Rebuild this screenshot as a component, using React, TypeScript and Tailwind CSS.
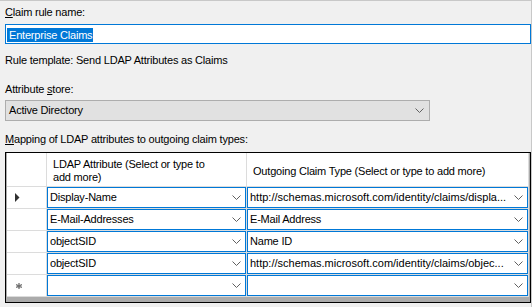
import React from "react";

const rows = [
  { attr: "Display-Name", claim: "http://schemas.microsoft.com/identity/claims/displa...", current: true },
  { attr: "E-Mail-Addresses", claim: "E-Mail Address" },
  { attr: "objectSID", claim: "Name ID" },
  { attr: "objectSID", claim: "http://schemas.microsoft.com/identity/claims/objec..." },
  { attr: "", claim: "", isNew: true },
];

function Chevron() {
  return (
    <svg width="9" height="5" viewBox="0 0 9 5" className="shrink-0">
      <path d="M0.5 0.5 L4.5 4.5 L8.5 0.5" fill="none" stroke="#606060" strokeWidth="1" />
    </svg>
  );
}

function ComboCell({ text }: { text: string }) {
  const isUrl = text.startsWith("http");
  return (
    <div className="h-[21px] border border-[#0078d7] bg-white flex items-center pl-[2px] pr-[4px] overflow-hidden">
      <span className={isUrl ? "flex-1 whitespace-nowrap overflow-hidden leading-[13px] tracking-normal" : "flex-1 whitespace-nowrap overflow-hidden leading-[13px]"}>
        {text}
      </span>
      <Chevron />
    </div>
  );
}

export default function App() {
  return (
    <div className="w-[532px] h-[307px] bg-[#f0f0f0] border-t border-r border-[#c8c8c8] overflow-hidden text-[11px] tracking-[-0.2px] text-black font-['Liberation_Sans',Arial,sans-serif]">
      <div className="pl-[5px] w-[531px]">
        <div className="mt-[5px] leading-[13px]">
          <span className="underline">C</span>laim rule name:
        </div>

        <div className="mt-[5px] w-[526px] h-[20px] border border-[#0078d7] bg-white py-[2px] pl-[1px]">
          <span className="inline-block bg-[#0078d7] text-white leading-[14px] pl-[2px] pr-[1px]">Enterprise Claims</span>
        </div>

        <div className="mt-[10px] leading-[13px]">Rule template: Send LDAP Attributes as Claims</div>

        <div className="mt-[16px] leading-[13px]">
          Attribute <span className="underline">s</span>tore:
        </div>

        <div className="mt-[4px] w-[425px] h-[21px] border border-[#adadad] bg-[#e1e1e1] flex items-center pl-[3px] pr-[5px]">
          <span className="flex-1 leading-[13px]">Active Directory</span>
          <Chevron />
        </div>

        <div className="mt-[12px] leading-[13px]">
          <span className="underline">M</span>apping of LDAP attributes to outgoing claim types:
        </div>

        <div className="mt-[6px] w-[526px] h-[151px] border border-black bg-[#ababab] px-[1px]">
          <div className="grid grid-cols-[40px_200px_282px] bg-white">
            {/* column headers */}
            <div className="h-[34px] border-r border-b border-[#dcdcdc]" />
            <div className="h-[34px] border-r border-b border-[#dcdcdc] flex items-center pl-[6px] pt-[3px] leading-[13px]">
              <span>
                LDAP Attribute (Select or type to
                <br />
                add more)
              </span>
            </div>
            <div className="h-[34px] border-r border-b border-[#dcdcdc] flex items-center pl-[6px] pt-[3px] leading-[13px] whitespace-nowrap">
              Outgoing Claim Type (Select or type to add more)
            </div>

            {rows.map((r, i) => (
              <React.Fragment key={i}>
                <div className="h-[22px] border-r border-b border-[#dcdcdc] flex items-center">
                  {r.current && (
                    <svg width="5" height="9" viewBox="0 0 5 9" className="ml-[8px]">
                      <path d="M0 0 L4.5 4.5 L0 9 Z" fill="#303030" />
                    </svg>
                  )}
                  {r.isNew && (
                    <svg width="6" height="6" viewBox="0 0 6 6" className="ml-[9px]">
                      <path d="M3 0 V6 M0 1.5 L6 4.5 M0 4.5 L6 1.5" stroke="#707070" strokeWidth="1.3" />
                    </svg>
                  )}
                </div>
                <div className="h-[22px] border-r border-b border-[#dcdcdc]">
                  <ComboCell text={r.attr} />
                </div>
                <div className="h-[22px] border-r border-b border-[#dcdcdc]">
                  <ComboCell text={r.claim} />
                </div>
              </React.Fragment>
            ))}
          </div>
        </div>
      </div>
    </div>
  );
}
